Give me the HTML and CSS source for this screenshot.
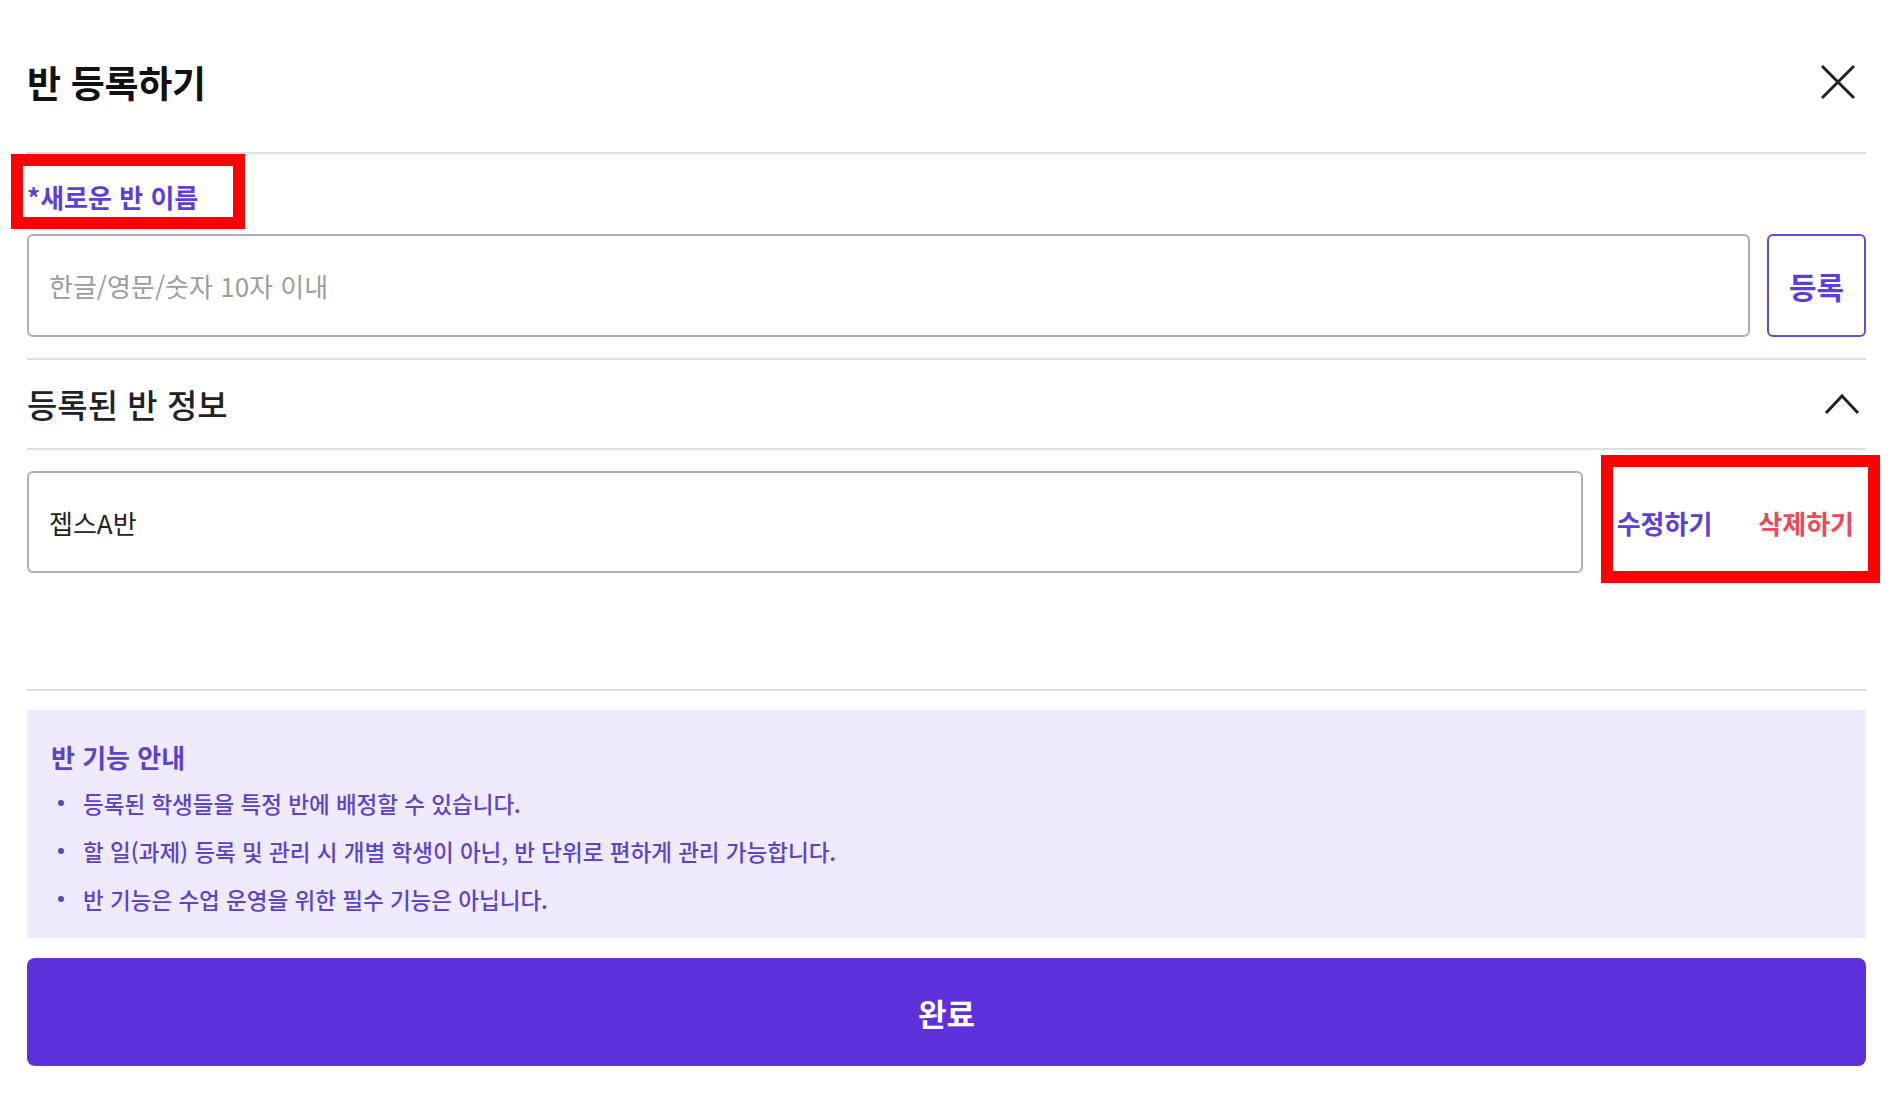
FILE: index.html
```html
<!DOCTYPE html>
<html lang="ko">
<head>
    <meta charset="UTF-8">
    <meta name="viewport" content="width=device-width, initial-scale=1.0">
    <title>반 등록하기</title>
    <link rel="stylesheet" href="styles.css">
</head>
<body>
    <div class="modal">
        <header class="modal-header">
            <h1>반 등록하기</h1>
            <button class="icon-btn close-btn" aria-label="닫기">
                <svg width="36" height="36" viewBox="0 0 36 36">
                    <path d="M2 2 L34 34 M34 2 L2 34" stroke="#222" stroke-width="3" fill="none"/>
                </svg>
            </button>
        </header>

        <section class="new-class">
            <div class="label-wrap highlight">
                <label class="field-label" for="className">*새로운 반 이름</label>
            </div>
            <div class="input-row">
                <input id="className" class="text-input" type="text" placeholder="한글/영문/숫자 10자 이내">
                <button class="register-btn">등록</button>
            </div>
        </section>

        <div class="section-head">
            <h2>등록된 반 정보</h2>
            <button class="icon-btn" aria-label="접기">
                <svg width="36" height="22" viewBox="0 0 36 22">
                    <path d="M2 20 L18 3 L34 20" stroke="#222" stroke-width="3" fill="none"/>
                </svg>
            </button>
        </div>

        <section class="class-list">
            <div class="class-row">
                <input class="text-input" type="text" value="젭스A반">
                <div class="row-actions highlight">
                    <button class="link-btn edit">수정하기</button>
                    <button class="link-btn delete">삭제하기</button>
                </div>
            </div>
        </section>

        <div class="notice">
            <h3>반 기능 안내</h3>
            <ul>
                <li>등록된 학생들을 특정 반에 배정할 수 있습니다.</li>
                <li>할 일(과제) 등록 및 관리 시 개별 학생이 아닌, 반 단위로 편하게 관리 가능합니다.</li>
                <li>반 기능은 수업 운영을 위한 필수 기능은 아닙니다.</li>
            </ul>
        </div>

        <button class="done-btn">완료</button>
    </div>
</body>
</html>
```

FILE: styles.css
```css
*, *::before, *::after {
    box-sizing: border-box;
}
body {
    margin: 0;
    background: #fff;
    color: #222;
    font-family: "Noto Sans CJK KR", "Noto Sans", sans-serif;
}
button {
    font-family: inherit;
    cursor: pointer;
}
.modal {
    padding: 0 29px 0 27px;
}
.modal-header {
    height: 154px;
    padding-top: 12px;
    display: flex;
    align-items: center;
    justify-content: space-between;
    border-bottom: 2px solid #dedede;
}
.modal-header h1 {
    margin: 0;
    font-size: 37px;
    font-weight: 700;
    letter-spacing: -0.3px;
    color: #111;
}
.icon-btn {
    background: none;
    border: none;
    padding: 0;
    display: flex;
}
.close-btn {
    margin-right: 10px;
}
.highlight {
    position: relative;
}
.highlight::after {
    content: '';
    position: absolute;
    border: 12px solid #fe0000;
    pointer-events: none;
}
.new-class {
    padding: 28px 0 21px;
    border-bottom: 2px solid #dedede;
}
.label-wrap {
    display: inline-block;
    height: 30px;
    margin-bottom: 22px;
}
.label-wrap::after {
    left: -16px;
    top: -28px;
    width: 234px;
    height: 75px;
}
.field-label {
    display: block;
    font-size: 26px;
    line-height: 30px;
    font-weight: 700;
    color: #5b3fdc;
}
.input-row {
    display: flex;
    gap: 17px;
}
.text-input {
    flex: 1;
    min-width: 0;
    height: 103px;
    border: 2px solid #b0b0b0;
    border-radius: 6px;
    padding: 0 20px;
    font-family: inherit;
    font-size: 26px;
    color: #222;
    outline: none;
}
.text-input::placeholder {
    color: #9c9c9c;
}
.register-btn {
    width: 99px;
    height: 103px;
    background: #fff;
    border: 2px solid #6548e6;
    border-radius: 6px;
    color: #5b3fdc;
    font-size: 30px;
    font-weight: 700;
}
.section-head {
    height: 90px;
    display: flex;
    align-items: center;
    justify-content: space-between;
    padding-right: 6px;
    border-bottom: 2px solid #dedede;
}
.section-head h2 {
    margin: 0;
    font-size: 33px;
    font-weight: 500;
    color: #222;
}
.class-list {
    height: 241px;
    padding-top: 21px;
    border-bottom: 2px solid #dedede;
}
.class-row {
    display: flex;
    align-items: center;
}
.class-row .text-input {
    height: 102px;
}
.row-actions {
    display: flex;
    align-items: center;
    gap: 46px;
    height: 102px;
    margin: 0 12px 0 34px;
}
.row-actions::after {
    left: -16px;
    right: -26px;
    top: -16px;
    bottom: -10px;
}
.link-btn {
    background: none;
    border: none;
    padding: 0;
    font-size: 26px;
    font-weight: 700;
}
.link-btn.edit {
    color: #5a3fdb;
}
.link-btn.delete {
    color: #f0475a;
}
.notice {
    margin-top: 19px;
    height: 228px;
    background: #efeafd;
    padding: 31px 24px 0;
    color: #5b44c9;
}
.notice h3 {
    margin: 0 0 6px;
    font-size: 26px;
    line-height: 32px;
    font-weight: 600;
}
.notice ul {
    margin: 0;
    padding: 0;
    list-style: none;
}
.notice li {
    display: flex;
    align-items: center;
    gap: 19px;
    height: 48px;
    padding-left: 7px;
    font-size: 22.5px;
    font-weight: 500;
}
.notice li::before {
    content: '';
    width: 6px;
    height: 6px;
    border-radius: 50%;
    background: #5b44c9;
}
.done-btn {
    display: block;
    width: 100%;
    height: 108px;
    margin-top: 20px;
    background: #5d30da;
    border: none;
    border-radius: 8px;
    color: #fff;
    font-size: 31px;
    font-weight: 700;
}
```
